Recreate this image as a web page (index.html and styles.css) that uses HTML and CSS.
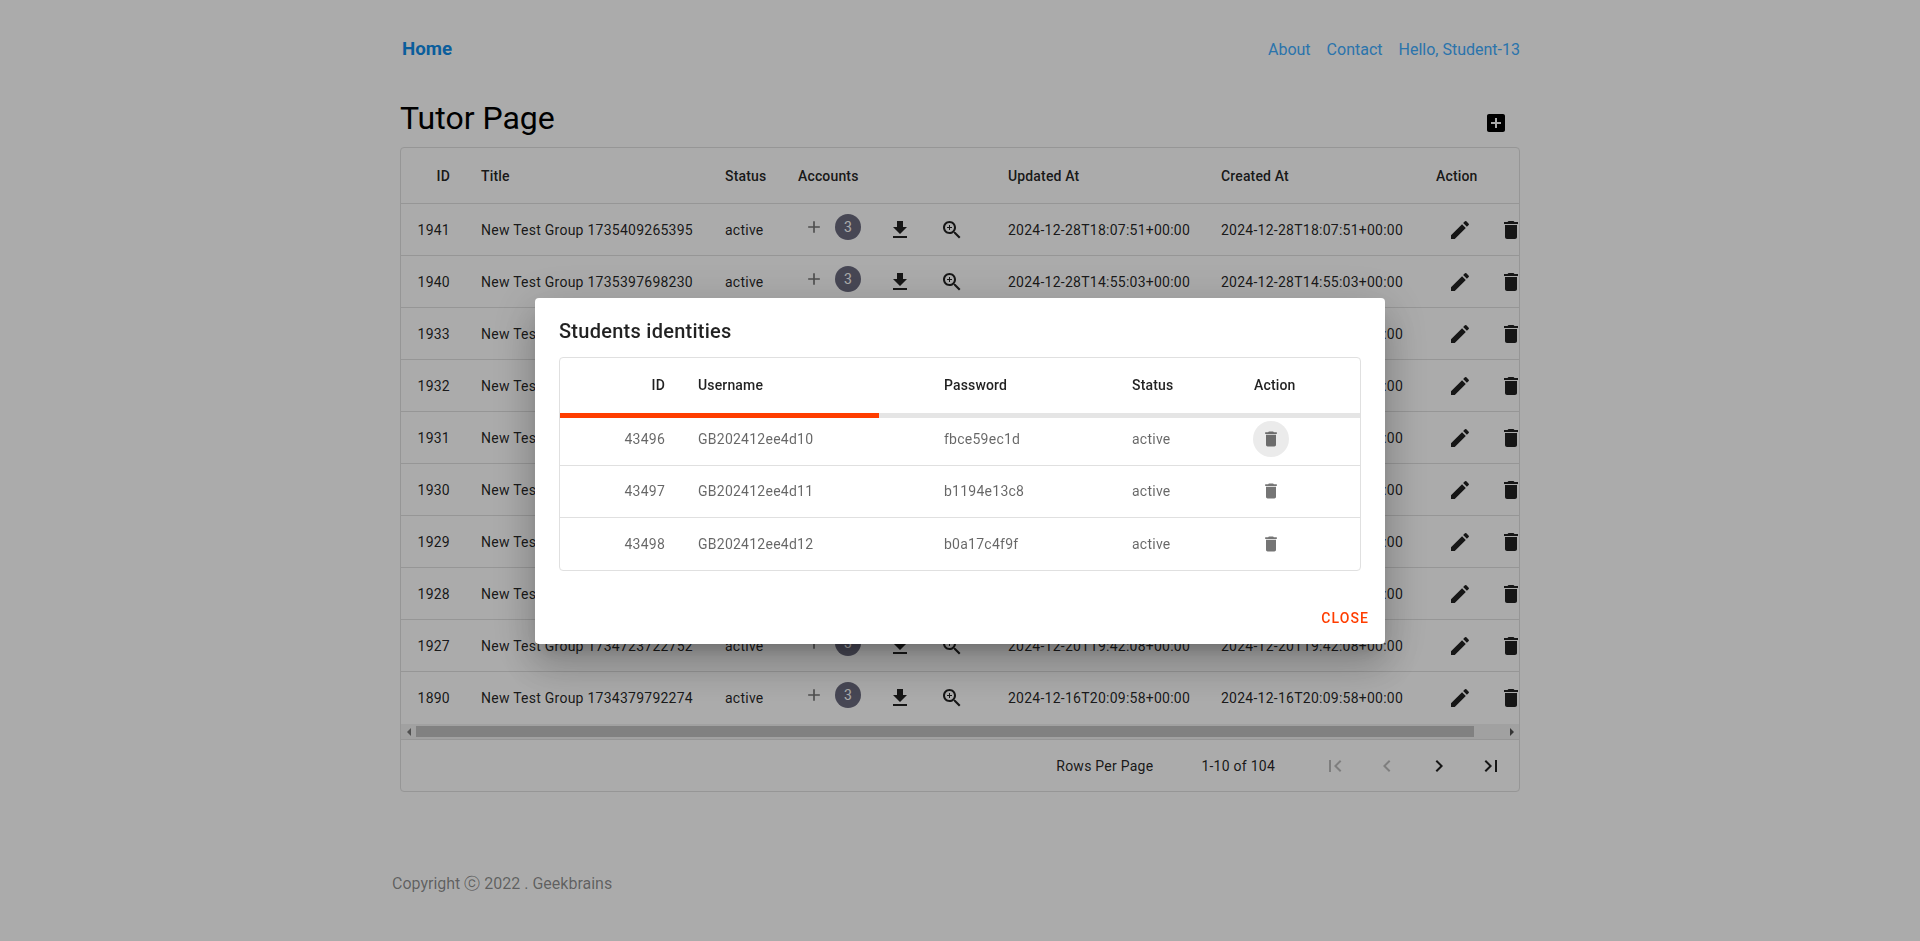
FILE: index.html
```html
<!DOCTYPE html>
<html lang="en">
<head>
    <meta charset="UTF-8">
    <meta name="viewport" content="width=device-width, initial-scale=1.0">
    <title>Tutor Page</title>
    <link rel="stylesheet" href="styles.css">
</head>
<body>
    <svg class="icon-defs" aria-hidden="true">
        <symbol id="i-add" viewBox="0 0 24 24"><path d="M19 13h-6v6h-2v-6H5v-2h6V5h2v6h6v2z"/></symbol>
        <symbol id="i-addbox" viewBox="0 0 24 24"><path d="M19 3H5c-1.11 0-2 .9-2 2v14c0 1.1.89 2 2 2h14c1.1 0 2-.9 2-2V5c0-1.1-.9-2-2-2m-2 10h-4v4h-2v-4H7v-2h4V7h2v4h4z"/></symbol>
        <symbol id="i-download" viewBox="0 0 24 24"><path d="M19 9h-4V3H9v6H5l7 7 7-7zM5 18v2h14v-2H5z"/></symbol>
        <symbol id="i-zoom" viewBox="0 0 24 24"><path d="M15.5 14h-.79l-.28-.27C15.41 12.59 16 11.11 16 9.5 16 5.91 13.09 3 9.5 3S3 5.91 3 9.5 5.91 16 9.5 16c1.61 0 3.09-.59 4.23-1.57l.27.28v.79l5 4.99L20.49 19l-4.99-5zm-6 0C7.01 14 5 11.99 5 9.5S7.01 5 9.5 5 14 7.01 14 9.5 11.99 14 9.5 14z"/><path d="M12 10h-2v2H9v-2H7V9h2V7h1v2h2v1z"/></symbol>
        <symbol id="i-edit" viewBox="0 0 24 24"><path d="M3 17.25V21h3.75L17.81 9.94l-3.75-3.75zM20.71 7.04c.39-.39.39-1.02 0-1.41l-2.34-2.34a.9959.9959 0 0 0-1.41 0l-1.83 1.83 3.75 3.75z"/></symbol>
        <symbol id="i-delete" viewBox="0 0 24 24"><path d="M6 19c0 1.1.9 2 2 2h8c1.1 0 2-.9 2-2V7H6zM19 4h-3.5l-1-1h-5l-1 1H5v2h14z"/></symbol>
        <symbol id="i-first" viewBox="0 0 24 24"><path d="M18.41 16.59 13.82 12l4.59-4.59L17 6l-6 6 6 6zM6 6h2v12H6z"/></symbol>
        <symbol id="i-prev" viewBox="0 0 24 24"><path d="M15.41 16.59 10.83 12l4.58-4.59L14 6l-6 6 6 6z"/></symbol>
        <symbol id="i-next" viewBox="0 0 24 24"><path d="M8.59 16.59 13.17 12 8.59 7.41 10 6l6 6-6 6z"/></symbol>
        <symbol id="i-last" viewBox="0 0 24 24"><path d="M5.59 7.41 10.18 12l-4.59 4.59L7 18l6-6-6-6zM16 6h2v12h-2z"/></symbol>
    </svg>

    <div class="page">
        <nav class="navbar">
            <a class="nav-home" href="#">Home</a>
            <div class="nav-links">
                <a href="#">About</a>
                <a href="#">Contact</a>
                <a href="#">Hello, Student-13</a>
            </div>
        </nav>

        <div class="title-row">
            <h1>Tutor Page</h1>
            <button class="icon-btn add-btn"><svg><use href="#i-addbox"/></svg></button>
        </div>

        <div class="table-card">
            <div class="table-scroll">
                <table class="groups">
                    <colgroup>
                        <col class="c-id"><col class="c-title"><col class="c-status"><col class="c-accounts"><col class="c-updated"><col class="c-created"><col class="c-action">
                    </colgroup>
                    <thead>
                        <tr><th class="num">ID</th><th>Title</th><th>Status</th><th>Accounts</th><th>Updated At</th><th>Created At</th><th>Action</th></tr>
                    </thead>
                    <tbody>
                        <tr>
                            <td class="num">1941</td><td>New Test Group 1735409265395</td><td>active</td>
                            <td class="accounts"><span class="acc-count"><span class="acc-add"><svg><use href="#i-add"/></svg></span><span class="badge">3</span></span> <button class="icon-btn"><svg><use href="#i-download"/></svg></button> <button class="icon-btn"><svg><use href="#i-zoom"/></svg></button></td>
                            <td>2024-12-28T18:07:51+00:00</td><td>2024-12-28T18:07:51+00:00</td>
                            <td class="actions"><button class="icon-btn"><svg><use href="#i-edit"/></svg></button> <button class="icon-btn"><svg><use href="#i-delete"/></svg></button></td>
                        </tr>
                        <tr>
                            <td class="num">1940</td><td>New Test Group 1735397698230</td><td>active</td>
                            <td class="accounts"><span class="acc-count"><span class="acc-add"><svg><use href="#i-add"/></svg></span><span class="badge">3</span></span> <button class="icon-btn"><svg><use href="#i-download"/></svg></button> <button class="icon-btn"><svg><use href="#i-zoom"/></svg></button></td>
                            <td>2024-12-28T14:55:03+00:00</td><td>2024-12-28T14:55:03+00:00</td>
                            <td class="actions"><button class="icon-btn"><svg><use href="#i-edit"/></svg></button> <button class="icon-btn"><svg><use href="#i-delete"/></svg></button></td>
                        </tr>
                        <tr>
                            <td class="num">1933</td><td>New Test Group 1735123110472</td><td>active</td>
                            <td class="accounts"><span class="acc-count"><span class="acc-add"><svg><use href="#i-add"/></svg></span><span class="badge">3</span></span> <button class="icon-btn"><svg><use href="#i-download"/></svg></button> <button class="icon-btn"><svg><use href="#i-zoom"/></svg></button></td>
                            <td>2024-12-25T10:38:30+00:00</td><td>2024-12-25T10:38:30+00:00</td>
                            <td class="actions"><button class="icon-btn"><svg><use href="#i-edit"/></svg></button> <button class="icon-btn"><svg><use href="#i-delete"/></svg></button></td>
                        </tr>
                        <tr>
                            <td class="num">1932</td><td>New Test Group 1735122874016</td><td>active</td>
                            <td class="accounts"><span class="acc-count"><span class="acc-add"><svg><use href="#i-add"/></svg></span><span class="badge">3</span></span> <button class="icon-btn"><svg><use href="#i-download"/></svg></button> <button class="icon-btn"><svg><use href="#i-zoom"/></svg></button></td>
                            <td>2024-12-25T10:34:34+00:00</td><td>2024-12-25T10:34:34+00:00</td>
                            <td class="actions"><button class="icon-btn"><svg><use href="#i-edit"/></svg></button> <button class="icon-btn"><svg><use href="#i-delete"/></svg></button></td>
                        </tr>
                        <tr>
                            <td class="num">1931</td><td>New Test Group 1735050236581</td><td>active</td>
                            <td class="accounts"><span class="acc-count"><span class="acc-add"><svg><use href="#i-add"/></svg></span><span class="badge">3</span></span> <button class="icon-btn"><svg><use href="#i-download"/></svg></button> <button class="icon-btn"><svg><use href="#i-zoom"/></svg></button></td>
                            <td>2024-12-24T14:23:56+00:00</td><td>2024-12-24T14:23:56+00:00</td>
                            <td class="actions"><button class="icon-btn"><svg><use href="#i-edit"/></svg></button> <button class="icon-btn"><svg><use href="#i-delete"/></svg></button></td>
                        </tr>
                        <tr>
                            <td class="num">1930</td><td>New Test Group 1735049981240</td><td>active</td>
                            <td class="accounts"><span class="acc-count"><span class="acc-add"><svg><use href="#i-add"/></svg></span><span class="badge">3</span></span> <button class="icon-btn"><svg><use href="#i-download"/></svg></button> <button class="icon-btn"><svg><use href="#i-zoom"/></svg></button></td>
                            <td>2024-12-24T14:19:41+00:00</td><td>2024-12-24T14:19:41+00:00</td>
                            <td class="actions"><button class="icon-btn"><svg><use href="#i-edit"/></svg></button> <button class="icon-btn"><svg><use href="#i-delete"/></svg></button></td>
                        </tr>
                        <tr>
                            <td class="num">1929</td><td>New Test Group 1734965102738</td><td>active</td>
                            <td class="accounts"><span class="acc-count"><span class="acc-add"><svg><use href="#i-add"/></svg></span><span class="badge">3</span></span> <button class="icon-btn"><svg><use href="#i-download"/></svg></button> <button class="icon-btn"><svg><use href="#i-zoom"/></svg></button></td>
                            <td>2024-12-23T14:45:02+00:00</td><td>2024-12-23T14:45:02+00:00</td>
                            <td class="actions"><button class="icon-btn"><svg><use href="#i-edit"/></svg></button> <button class="icon-btn"><svg><use href="#i-delete"/></svg></button></td>
                        </tr>
                        <tr>
                            <td class="num">1928</td><td>New Test Group 1734724018365</td><td>active</td>
                            <td class="accounts"><span class="acc-count"><span class="acc-add"><svg><use href="#i-add"/></svg></span><span class="badge">3</span></span> <button class="icon-btn"><svg><use href="#i-download"/></svg></button> <button class="icon-btn"><svg><use href="#i-zoom"/></svg></button></td>
                            <td>2024-12-20T19:46:58+00:00</td><td>2024-12-20T19:46:58+00:00</td>
                            <td class="actions"><button class="icon-btn"><svg><use href="#i-edit"/></svg></button> <button class="icon-btn"><svg><use href="#i-delete"/></svg></button></td>
                        </tr>
                        <tr>
                            <td class="num">1927</td><td>New Test Group 1734723722752</td><td>active</td>
                            <td class="accounts"><span class="acc-count"><span class="acc-add"><svg><use href="#i-add"/></svg></span><span class="badge">3</span></span> <button class="icon-btn"><svg><use href="#i-download"/></svg></button> <button class="icon-btn"><svg><use href="#i-zoom"/></svg></button></td>
                            <td>2024-12-20T19:42:08+00:00</td><td>2024-12-20T19:42:08+00:00</td>
                            <td class="actions"><button class="icon-btn"><svg><use href="#i-edit"/></svg></button> <button class="icon-btn"><svg><use href="#i-delete"/></svg></button></td>
                        </tr>
                        <tr>
                            <td class="num">1890</td><td>New Test Group 1734379792274</td><td>active</td>
                            <td class="accounts"><span class="acc-count"><span class="acc-add"><svg><use href="#i-add"/></svg></span><span class="badge">3</span></span> <button class="icon-btn"><svg><use href="#i-download"/></svg></button> <button class="icon-btn"><svg><use href="#i-zoom"/></svg></button></td>
                            <td>2024-12-16T20:09:58+00:00</td><td>2024-12-16T20:09:58+00:00</td>
                            <td class="actions"><button class="icon-btn"><svg><use href="#i-edit"/></svg></button> <button class="icon-btn"><svg><use href="#i-delete"/></svg></button></td>
                        </tr>
                    </tbody>
                </table>
            </div>
            <div class="scrollbar">
                <span class="scroll-btn"><span class="arrow-left"></span></span>
                <div class="scroll-track"><div class="scroll-thumb"></div></div>
                <span class="scroll-btn"><span class="arrow-right"></span></span>
            </div>
            <div class="pagination">
                <span class="rows-label">Rows Per Page</span>
                <span class="rows-range">1-10 of 104</span>
                <button class="icon-btn disabled"><svg><use href="#i-first"/></svg></button>
                <button class="icon-btn disabled"><svg><use href="#i-prev"/></svg></button>
                <button class="icon-btn"><svg><use href="#i-next"/></svg></button>
                <button class="icon-btn"><svg><use href="#i-last"/></svg></button>
            </div>
        </div>

        <footer class="footer">Copyright ⓒ 2022 . Geekbrains</footer>
    </div>

    <div class="backdrop">
        <div class="dialog">
            <h2>Students identities</h2>
            <div class="identities-card">
                <div class="progress"><div class="progress-bar"></div></div>
                <table class="identities">
                    <colgroup>
                        <col class="d-id"><col class="d-user"><col class="d-pass"><col class="d-status"><col class="d-action">
                    </colgroup>
                    <thead>
                        <tr><th class="num">ID</th><th>Username</th><th>Password</th><th>Status</th><th>Action</th></tr>
                    </thead>
                    <tbody>
                        <tr>
                            <td class="num">43496</td><td>GB202412ee4d10</td><td>fbce59ec1d</td><td>active</td>
                            <td><button class="small-btn hover"><svg><use href="#i-delete"/></svg></button></td>
                        </tr>
                        <tr>
                            <td class="num">43497</td><td>GB202412ee4d11</td><td>b1194e13c8</td><td>active</td>
                            <td><button class="small-btn"><svg><use href="#i-delete"/></svg></button></td>
                        </tr>
                        <tr>
                            <td class="num">43498</td><td>GB202412ee4d12</td><td>b0a17c4f9f</td><td>active</td>
                            <td><button class="small-btn"><svg><use href="#i-delete"/></svg></button></td>
                        </tr>
                    </tbody>
                </table>
            </div>
            <div class="dialog-actions">
                <button class="close-btn">Close</button>
            </div>
        </div>
    </div>
</body>
</html>
```

FILE: styles.css
```css
* {
    box-sizing: border-box;
}
html, body {
    height: 100%;
}
body {
    margin: 0;
    background-color: #fff;
    color: rgba(0,0,0,0.87);
    font-family: Roboto, "Liberation Sans", sans-serif;
    overflow: hidden;
}
.icon-defs {
    display: none;
}
.page {
    width: 1120px;
    margin: 0 auto;
}

/* nav */
.navbar {
    display: flex;
    justify-content: space-between;
    align-items: center;
    height: 98px;
    padding-left: 2px;
}
.navbar a {
    text-decoration: none;
    color: #40adff;
}
.navbar .nav-home {
    padding-bottom: 1px;
    font-size: 18.72px;
    font-weight: 700;
    color: #108ce9;
}
.nav-links {
    display: flex;
    gap: 16px;
    font-size: 16px;
}

.title-row {
    display: flex;
    justify-content: space-between;
    align-items: flex-start;
    height: 49px;
}
h1 {
    margin: 0;
    font-size: 32px;
    font-weight: 400;
    line-height: 40px;
    color: #000;
}

/* buttons */
button {
    font-family: inherit;
    border: none;
    background: none;
    cursor: pointer;
}
.icon-btn {
    display: inline-flex;
    align-items: center;
    justify-content: center;
    width: 48px;
    height: 48px;
    padding: 12px;
    vertical-align: middle;
    color: rgba(0,0,0,0.87);
}
.icon-btn svg {
    width: 24px;
    height: 24px;
    fill: currentColor;
}
.icon-btn.disabled {
    color: rgba(0,0,0,0.26);
}
.add-btn {
    margin-top: 1px;
    color: #000;
}

/* main table */
.table-card {
    border: 1px solid #e0e0e0;
    border-radius: 4px;
}
.table-scroll {
    overflow: hidden;
}
table {
    border-collapse: separate;
    border-spacing: 0;
    table-layout: fixed;
}
.groups {
    width: 1151px;
}
.c-id { width: 64px; }
.c-title { width: 244px; }
.c-status { width: 73px; }
.c-accounts { width: 210px; }
.c-updated { width: 213px; }
.c-created { width: 215px; }
.c-action { width: 132px; }
th, td {
    padding: 0 16px;
    font-size: 14px;
    text-align: left;
    border-bottom: 1px solid #e0e0e0;
    white-space: nowrap;
}
th {
    height: 56px;
    font-weight: 500;
    letter-spacing: 0.15px;
}
td {
    height: 52px;
    letter-spacing: 0.25px;
}
td.accounts, td.actions {
    letter-spacing: 0;
}
.num {
    text-align: right;
}
.groups .num {
    padding-right: 15px;
}
tbody tr:last-child td {
    border-bottom: none;
}
.acc-count {
    display: inline-flex;
    align-items: center;
    width: 75px;
    vertical-align: middle;
    margin-bottom: 6px;
}
.acc-add {
    display: inline-flex;
    justify-content: center;
    width: 32px;
    color: rgba(0,0,0,0.54);
}
.acc-add svg {
    width: 20px;
    height: 20px;
    fill: currentColor;
}
.badge {
    width: 26px;
    height: 26px;
    margin-left: 5px;
    border-radius: 50%;
    background-color: #6a6a7e;
    color: #fff;
    font-size: 14px;
    line-height: 26px;
    text-align: center;
}

/* the browser's own scrollbar does not show up in the shot */
.scrollbar {
    display: flex;
    height: 15px;
    background-color: #f1f1f1;
}
.scroll-btn {
    display: flex;
    align-items: center;
    justify-content: center;
    width: 15px;
}
.arrow-left {
    border-top: 4px solid transparent;
    border-bottom: 4px solid transparent;
    border-right: 4px solid #7a7a7a;
}
.arrow-right {
    border-top: 4px solid transparent;
    border-bottom: 4px solid transparent;
    border-left: 4px solid #505050;
}
.scroll-track {
    flex: 1;
    padding: 2px 0;
}
.scroll-thumb {
    width: 1058px;
    height: 11px;
    background-color: #c1c1c1;
}

/* pagination */
.pagination {
    display: flex;
    align-items: center;
    justify-content: flex-end;
    height: 52px;
    padding-right: 4px;
    border-top: 1px solid #e0e0e0;
    font-size: 14px;
    letter-spacing: 0.25px;
}
.rows-range {
    margin-left: 48px;
    margin-right: 36px;
}
.pagination .icon-btn {
    margin-left: 4px;
}
.rows-range + .icon-btn {
    margin-left: 0;
}

.footer {
    margin: 80px 0 0 -8px;
    font-size: 16px;
    line-height: 24px;
    color: rgba(0,0,0,0.45);
}

/* dialog */
.backdrop {
    position: fixed;
    inset: 0;
    display: flex;
    align-items: center;
    justify-content: center;
    padding-top: 1px;
    background-color: rgba(0,0,0,0.33);
}
.dialog {
    width: 850px;
    background-color: #fff;
    border-radius: 4px;
    box-shadow: 0 11px 15px -7px rgba(0,0,0,0.2), 0 24px 38px 3px rgba(0,0,0,0.14), 0 9px 46px 8px rgba(0,0,0,0.12);
}
h2 {
    margin: 0;
    padding: 17px 24px 10px;
    font-size: 20px;
    font-weight: 500;
    line-height: 32px;
    letter-spacing: 0.26px;
}
.identities-card {
    position: relative;
    margin: 0 24px;
    border: 1px solid #e0e0e0;
    border-radius: 4px;
}
.identities {
    width: 800px;
}
.d-id { width: 122px; }
.d-user { width: 246px; }
.d-pass { width: 188px; }
.d-status { width: 122px; }
.d-action { width: 122px; }
.identities .num {
    padding-right: 17px;
}
.identities th {
    padding-bottom: 2px;
}
.identities td {
    padding-bottom: 2px;
    color: rgba(0,0,0,0.6);
}
.identities tbody tr:last-child td {
    padding-bottom: 0;
}
.progress {
    position: absolute;
    top: 55px;
    left: 0;
    right: 0;
    height: 5px;
    background-color: #e5e5e5;
}
.progress-bar {
    width: 39.9%;
    height: 100%;
    background-color: #ff3d00;
}
.small-btn {
    display: inline-flex;
    width: 36px;
    height: 36px;
    padding: 8px;
    margin-left: -1px;
    vertical-align: middle;
    border-radius: 50%;
    color: rgba(0,0,0,0.54);
}
.small-btn svg {
    width: 20px;
    height: 20px;
    fill: currentColor;
}
.small-btn.hover {
    background-color: #ebebeb;
}
.dialog-actions {
    display: flex;
    justify-content: flex-end;
    padding: 29px 8px 8px;
}
.close-btn {
    height: 36px;
    padding: 6px 8px;
    font-size: 14px;
    font-weight: 500;
    letter-spacing: 1.1px;
    text-transform: uppercase;
    color: #ff3d00;
}
```
